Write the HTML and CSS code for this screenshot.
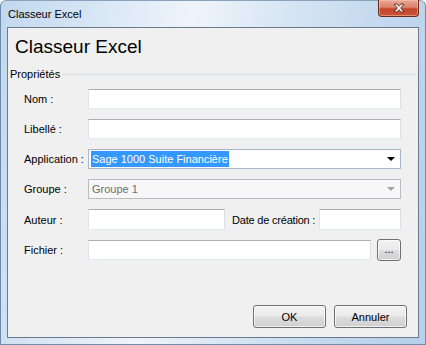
FILE: index.html
```html
<!DOCTYPE html>
<html lang="fr">
<head>
    <meta charset="UTF-8">
    <title>Classeur Excel</title>
    <link rel="stylesheet" href="styles.css">
</head>
<body>
    <div class="window">
        <div class="titlebar">
            <span class="title">Classeur Excel</span>
            <div class="close-btn">
                <svg width="14" height="10" viewBox="0 0 14 10">
                    <path d="M2 1h3l2 2.3L9 1h3L8.6 5 12 9H9L7 6.7 5 9H2l3.4-4z" fill="#fff" stroke="#4a1a10" stroke-width="0.8" stroke-linejoin="round"/>
                </svg>
            </div>
        </div>

        <div class="client">
            <h1 class="heading">Classeur Excel</h1>

            <div class="group-title"><span>Propriétés</span></div>

            <div class="fields">
                <div class="row">
                    <label>Nom :</label>
                    <input type="text" class="textbox grow">
                </div>
                <div class="row">
                    <label>Libellé :</label>
                    <input type="text" class="textbox grow">
                </div>
                <div class="row">
                    <label>Application :</label>
                    <div class="combo grow">
                        <span class="selected">Sage 1000 Suite Financière</span>
                        <span class="arrow"></span>
                    </div>
                </div>
                <div class="row">
                    <label>Groupe :</label>
                    <div class="combo disabled grow">
                        <span class="value">Groupe 1</span>
                        <span class="arrow"></span>
                    </div>
                </div>
                <div class="row tall">
                    <label>Auteur :</label>
                    <input type="text" class="textbox author">
                    <label class="date-label">Date de création :</label>
                    <input type="text" class="textbox date">
                </div>
                <div class="row">
                    <label>Fichier :</label>
                    <input type="text" class="textbox grow">
                    <button class="btn browse">...</button>
                </div>
            </div>

            <div class="buttons">
                <button class="btn dlg">OK</button>
                <button class="btn dlg">Annuler</button>
            </div>
        </div>
    </div>
</body>
</html>
```

FILE: styles.css
```css
body {
    margin: 0;
    font-family: "Liberation Sans", Arial, sans-serif;
    font-size: 11px;
    color: #000;
}

.window {
    width: 426px;
    height: 345px;
    box-sizing: border-box;
    padding: 0 6px 6px 6px;
    display: flex;
    flex-direction: column;
    border: 1px solid #6d8bab;
    border-top-color: #8aa3bd;
    border-radius: 6px 6px 0 0;
    background: linear-gradient(100deg, #c2d7ee 0%, #d8e6f5 20%, #eef4fa 40%, #d6e5f3 60%, #c3d8ee 80%, #b6cfea 100%);
}

.titlebar {
    height: 26px;
    display: flex;
    justify-content: space-between;
    align-items: flex-start;
    flex-shrink: 0;
}

.title {
    margin-top: 7px;
    margin-left: 1px;
    font-size: 11px;
    color: #000;
}

.close-btn {
    width: 41px;
    height: 17px;
    margin-top: -1px;
    box-sizing: border-box;
    border: 1px solid #6a2a1c;
    border-top: none;
    border-radius: 0 0 4px 4px;
    background: linear-gradient(#e9a999 0%, #dc826c 45%, #c4452a 55%, #c8533a 100%);
    display: flex;
    align-items: center;
    justify-content: center;
    box-shadow: inset 0 0 0 1px rgba(255, 200, 180, 0.5);
}

.client {
    flex: 1;
    display: flex;
    flex-direction: column;
    background: #f0f0f0;
    border: 1px solid #6a7a8c;
}

.heading {
    margin: 8px 0 0 7px;
    font-size: 19px;
    font-weight: normal;
    line-height: 22px;
    color: #000;
}

.group-title {
    display: flex;
    align-items: center;
    margin: 10px 0 0 2px;
    line-height: 13px;
}

.group-title::after {
    content: "";
    flex: 1;
    height: 0;
    border-top: 1px solid #d5dfe5;
    margin-left: 3px;
    margin-right: 1px;
}

.fields {
    display: flex;
    flex-direction: column;
    gap: 10px;
    margin: 8px 17px 0 16px;
}

.row {
    display: flex;
    align-items: center;
    height: 20px;
}

.row.tall {
    height: 21px;
}

.row label {
    width: 64px;
    flex-shrink: 0;
}

.textbox {
    height: 100%;
    box-sizing: border-box;
    margin: 0;
    padding: 0 2px;
    background: #fff;
    border: 1px solid;
    border-color: #abadb3 #dbdfe6 #e3e9ef #e2e3ea;
    outline: none;
    font: inherit;
}

.grow {
    flex: 1;
    min-width: 0;
}

.author {
    width: 137px;
    flex-shrink: 0;
}

.row .date-label {
    width: auto;
    margin-left: 7px;
    letter-spacing: -0.2px;
    white-space: nowrap;
}

.date {
    width: 82px;
    flex-shrink: 0;
    margin-left: auto;
}

.combo {
    height: 100%;
    box-sizing: border-box;
    display: flex;
    align-items: center;
    padding: 0 0 0 2px;
    background: #fff;
    border: 1px solid #a7b7c8;
}

.combo .selected {
    background: #3399ff;
    color: #fff;
    padding: 1px 1px;
    line-height: 14px;
}

.combo .value {
    padding-left: 1px;
    color: #6d6d6d;
}

.combo .arrow {
    margin-left: auto;
    margin-right: 5px;
    width: 0;
    height: 0;
    border-left: 4px solid transparent;
    border-right: 4px solid transparent;
    border-top: 4px solid #000;
}

.combo.disabled {
    background: #f7f7f7;
    border-color: #b8bcc0;
}

.combo.disabled .arrow {
    border-top-color: #a3a3a3;
}

.btn {
    box-sizing: border-box;
    margin: 0;
    padding: 0;
    border: 1px solid #707070;
    border-radius: 3px;
    background: linear-gradient(#f2f2f2 0%, #ebebeb 49%, #dddddd 51%, #cfcfcf 100%);
    box-shadow: inset 0 0 0 1px rgba(255, 255, 255, 0.7);
    font: inherit;
    color: #000;
}

.browse {
    width: 24px;
    height: 22px;
    margin-left: 6px;
    line-height: 12px;
    padding-bottom: 2px;
}

.buttons {
    margin-top: auto;
    margin-bottom: 9px;
    margin-right: 11px;
    display: flex;
    justify-content: flex-end;
    gap: 8px;
}

.dlg {
    width: 73px;
    height: 23px;
}
```
